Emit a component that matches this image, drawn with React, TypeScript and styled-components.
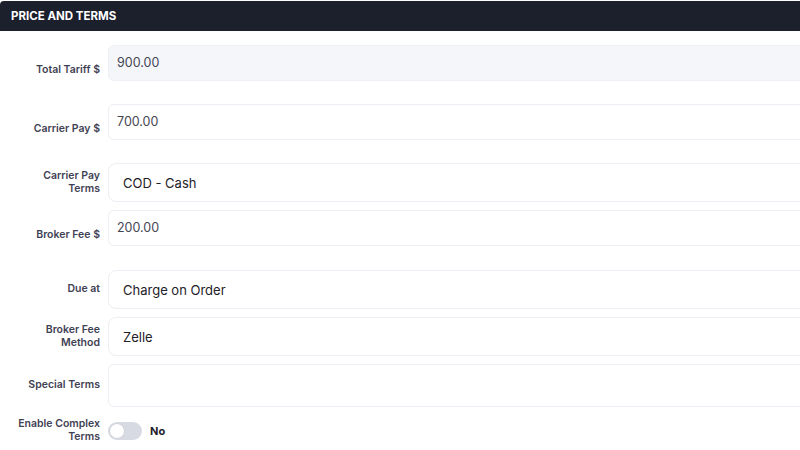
import React from "react";
import styled, { createGlobalStyle } from "styled-components";

const GlobalStyle = createGlobalStyle`
	html, body {
		margin: 0;
		padding: 0;
		background: #ffffff;
		overflow: hidden;
	}
	body {
		font-family: Inter, "Noto Sans", "Liberation Sans", sans-serif;
		-webkit-font-smoothing: antialiased;
	}
`;

const Panel = styled.section`
	width: 840px;
	background: #ffffff;
`;

const Header = styled.header`
	height: 30px;
	margin-top: 1px;
	display: flex;
	align-items: center;
	padding: 0 11px;
	background: #1c202c;
	border-radius: 4px 4px 0 0;
	color: #ffffff;
	font-size: 11.5px;
	font-weight: 700;
`;

const Body = styled.div`
	display: flex;
	flex-direction: column;
	gap: 8px;
	padding-top: 14px;
`;

const Row = styled.div<{ $offset?: number }>`
	display: grid;
	grid-template-columns: 100px 1fr;
	column-gap: 8px;
	align-items: center;
	margin-top: ${(p) => p.$offset ?? 0}px;
`;

const Label = styled.label`
	text-align: right;
	font-size: 10.5px;
	line-height: 12.5px;
	font-weight: 600;
	color: #3f4254;
`;

const Field = styled.div<{ $hint?: boolean }>`
	padding-bottom: ${(p) => (p.$hint ? "15px" : "0")};
`;

const TextInput = styled.input<{ $disabled?: boolean }>`
	box-sizing: border-box;
	display: block;
	width: 100%;
	height: 36px;
	padding: 0 8px 2px;
	border: 1px solid ${(p) => (p.$disabled ? "#eef0f5" : "#eceef3")};
	border-radius: 6px;
	background: ${(p) => (p.$disabled ? "#f5f6fa" : "#ffffff")};
	font-family: inherit;
	font-size: 12.5px;
	color: #444652;
	outline: none;
`;

const Select = styled.div`
	box-sizing: border-box;
	display: flex;
	align-items: center;
	height: 39px;
	padding: 0 14px;
	border: 1px solid #eceef3;
	border-radius: 8px;
	background: #ffffff;
	font-size: 13px;
	color: #1e2129;
`;

const TextArea = styled.textarea`
	box-sizing: border-box;
	display: block;
	width: 100%;
	height: 43px;
	border: 1px solid #eceef3;
	border-radius: 6px;
	resize: none;
	font-family: inherit;
	outline: none;
`;

const ToggleRow = styled.div`
	display: flex;
	align-items: center;
	gap: 8px;
`;

const Track = styled.span<{ $on: boolean }>`
	position: relative;
	width: 34px;
	height: 18px;
	border-radius: 9px;
	background: ${(p) => (p.$on ? "#1c202c" : "#d7dae2")};
`;

const Knob = styled.span<{ $on: boolean }>`
	position: absolute;
	top: 2px;
	left: ${(p) => (p.$on ? "18px" : "2px")};
	width: 14px;
	height: 14px;
	border-radius: 50%;
	background: #ffffff;
	box-shadow: 0 0 0 0.5px #c8ccd5;
`;

const ToggleText = styled.span`
	font-size: 11px;
	font-weight: 700;
	color: #1e2129;
`;

const Switch = ({ on }: { on: boolean }) => (
	<ToggleRow>
		<Track $on={on}>
			<Knob $on={on} />
		</Track>
		<ToggleText>{on ? "Yes" : "No"}</ToggleText>
	</ToggleRow>
);

export default function App() {
	return (
		<Panel>
			<GlobalStyle />
			<Header>PRICE AND TERMS</Header>
			<Body>
				<Row>
					<Label>Total Tariff $</Label>
					<Field $hint>
						<TextInput $disabled readOnly defaultValue='900.00' />
					</Field>
				</Row>
				<Row>
					<Label>Carrier Pay $</Label>
					<Field $hint>
						<TextInput readOnly defaultValue='700.00' />
					</Field>
				</Row>
				<Row>
					<Label>
						Carrier Pay
						<br />
						Terms
					</Label>
					<Select>COD - Cash</Select>
				</Row>
				<Row>
					<Label>Broker Fee $</Label>
					<Field $hint>
						<TextInput readOnly defaultValue='200.00' />
					</Field>
				</Row>
				<Row $offset={1}>
					<Label>Due at</Label>
					<Select>Charge on Order</Select>
				</Row>
				<Row>
					<Label>
						Broker Fee
						<br />
						Method
					</Label>
					<Select>Zelle</Select>
				</Row>
				<Row>
					<Label>Special Terms</Label>
					<TextArea readOnly />
				</Row>
				<Row $offset={3}>
					<Label>
						Enable Complex
						<br />
						Terms
					</Label>
					<Switch on={false} />
				</Row>
			</Body>
		</Panel>
	);
}
